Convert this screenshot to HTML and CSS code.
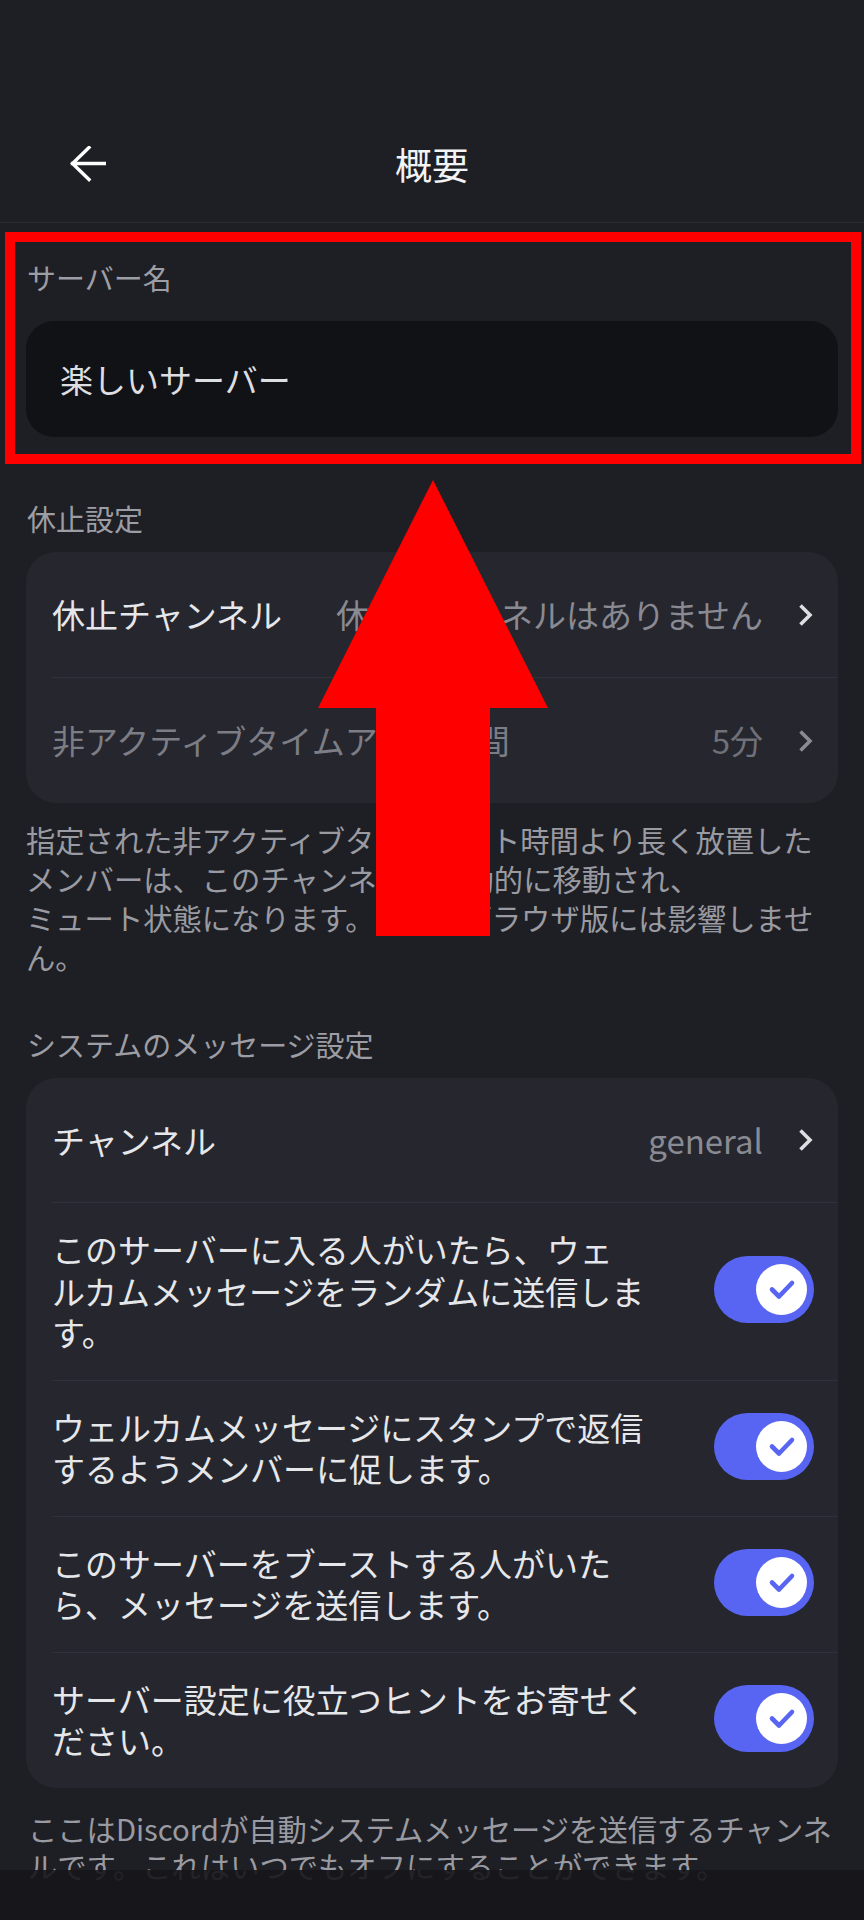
FILE: index.html
```html
<!DOCTYPE html>
<html lang="ja">
<head>
<meta charset="utf-8">
<title>概要</title>
<link rel="stylesheet" href="styles.css">
</head>
<body>
<div class="screen">
  <header class="topbar">
    <div class="topbar-row">
      <button class="back" aria-label="戻る">
        <svg width="36" height="36" viewBox="0 0 36 36"><path d="M19 1.5 L2.5 17.5 L19 33.5 M2.5 17.5 H35" fill="none" stroke="#ffffff" stroke-width="3.4" stroke-linecap="square" stroke-linejoin="miter"/></svg>
      </button>
      <h1 class="title">概要</h1>
      <span></span>
    </div>
  </header>

  <main class="content">
    <section class="group group-name">
      <h2 class="group-label">サーバー名</h2>
      <div class="input">楽しいサーバー</div>
    </section>

    <section class="group group-afk">
      <h2 class="group-label">休止設定</h2>
      <div class="card">
        <div class="row nav-row row-first">
          <span class="row-title">休止チャンネル</span>
          <span class="row-value">休止チャンネルはありません</span>
          <svg class="chev" width="15" height="24" viewBox="0 0 15 24"><path d="M2.5 2.5 L12 12 L2.5 21.5" fill="none" stroke="#dcdee1" stroke-width="3.6"/></svg>
        </div>
        <div class="row nav-row row-second disabled">
          <span class="row-title">非アクティブタイムアウト時間</span>
          <span class="row-value">5分</span>
          <svg class="chev" width="15" height="24" viewBox="0 0 15 24"><path d="M2.5 2.5 L12 12 L2.5 21.5" fill="none" stroke="#8a8b92" stroke-width="3.6"/></svg>
        </div>
      </div>
      <p class="hint hint-afk">指定された非アクティブタイムアウト時間より長く放置した<br>メンバーは、このチャンネルに自動的に移動され、<br>ミュート状態になります。これはブラウザ版には影響しませ<br>ん。</p>
    </section>

    <section class="group group-system">
      <h2 class="group-label">システムのメッセージ設定</h2>
      <div class="card">
        <div class="row nav-row row-channel">
          <span class="row-title">チャンネル</span>
          <span class="row-value">general</span>
          <svg class="chev" width="15" height="24" viewBox="0 0 15 24"><path d="M2.5 2.5 L12 12 L2.5 21.5" fill="none" stroke="#dcdee1" stroke-width="3.6"/></svg>
        </div>
        <div class="row toggle-row">
          <span class="toggle-text">このサーバーに入る人がいたら、ウェ<br>ルカムメッセージをランダムに送信しま<br>す。</span>
          <span class="toggle"><span class="knob"><svg width="50" height="50" viewBox="0 0 50 50"><path d="M15 24.5 L22 31.5 L35 18" fill="none" stroke="#5865f2" stroke-width="4.6" stroke-linecap="round" stroke-linejoin="round"/></svg></span></span>
        </div>
        <div class="row toggle-row">
          <span class="toggle-text">ウェルカムメッセージにスタンプで返信<br>するようメンバーに促します。</span>
          <span class="toggle"><span class="knob"><svg width="50" height="50" viewBox="0 0 50 50"><path d="M15 24.5 L22 31.5 L35 18" fill="none" stroke="#5865f2" stroke-width="4.6" stroke-linecap="round" stroke-linejoin="round"/></svg></span></span>
        </div>
        <div class="row toggle-row">
          <span class="toggle-text">このサーバーをブーストする人がいた<br>ら、メッセージを送信します。</span>
          <span class="toggle"><span class="knob"><svg width="50" height="50" viewBox="0 0 50 50"><path d="M15 24.5 L22 31.5 L35 18" fill="none" stroke="#5865f2" stroke-width="4.6" stroke-linecap="round" stroke-linejoin="round"/></svg></span></span>
        </div>
        <div class="row toggle-row">
          <span class="toggle-text">サーバー設定に役立つヒントをお寄せく<br>ださい。</span>
          <span class="toggle"><span class="knob"><svg width="50" height="50" viewBox="0 0 50 50"><path d="M15 24.5 L22 31.5 L35 18" fill="none" stroke="#5865f2" stroke-width="4.6" stroke-linecap="round" stroke-linejoin="round"/></svg></span></span>
        </div>
      </div>
      <p class="hint hint-system">ここはDiscordが自動システムメッセージを送信するチャンネ<br>ルです。これはいつでもオフにすることができます。</p>
    </section>
  </main>

  <div class="navbar"></div>

  <div class="annot-box"></div>
  <svg class="annot-arrow" width="864" height="960" viewBox="0 0 864 960">
    <polygon points="433,480 548,708 490,708 490,936 376,936 376,708 318,708" fill="#ff0000"/>
  </svg>
</div>
</body>
</html>
```

FILE: styles.css
```css
* {
  box-sizing: border-box;
}

html, body {
  margin: 0;
  padding: 0;
  background: #1e1f24;
}

body {
  font-family: "Noto Sans CJK JP", "Noto Sans", sans-serif;
  color: #e4e5e8;
}

.screen {
  position: relative;
  width: 864px;
  height: 1920px;
  overflow: hidden;
  background: #1e1f24;
}

/* header */
.topbar {
  height: 223px;
  padding-top: 106px;
  border-bottom: 1px solid #2b2c32;
}

.topbar-row {
  display: grid;
  grid-template-columns: 1fr auto 1fr;
  align-items: center;
  height: 116px;
}

.back {
  justify-self: start;
  margin-left: 70px;
  width: 36px;
  height: 36px;
  padding: 0;
  border: 0;
  background: none;
  display: flex;
}

.title {
  margin: 0;
  font-size: 37px;
  font-weight: 400;
  line-height: 44px;
  color: #f2f3f5;
}

/* content */
.content {
  padding: 34px 26px 0;
}

.group-label {
  margin: 0 0 14px;
  padding-left: 1px;
  font-size: 29px;
  font-weight: 400;
  line-height: 40px;
  color: #9d9ea5;
}

.group-name .group-label {
  margin-bottom: 24px;
}

.input {
  height: 116px;
  display: flex;
  align-items: center;
  padding-left: 34px;
  border-radius: 28px;
  background: #111215;
  font-size: 33px;
  color: #dddee1;
}

.group-afk {
  margin-top: 61px;
}

.group-system {
  margin-top: 48px;
}

.card {
  background: #25262e;
  border-radius: 30px;
  padding-left: 26px;
}

.row {
  display: flex;
  align-items: center;
  padding-right: 24px;
}

.row + .row {
  border-top: 1.5px solid #30313a;
}

.nav-row {
  height: 125px;
  font-size: 33px;
  line-height: 41px;
}

.row-second {
  height: 126px;
}

.row-channel {
  height: 124px;
}

.row-title {
  white-space: nowrap;
  color: #e6e7ea;
}

.row-value {
  margin-left: auto;
  white-space: nowrap;
  color: #898a92;
}

.disabled .row-title {
  color: #7c7d85;
}

.disabled .row-value {
  color: #6f7078;
}

.chev {
  flex: none;
  margin-left: 35px;
  margin-right: 1px;
}

.toggle-row {
  padding-top: 26px;
  padding-bottom: 26px;
  justify-content: space-between;
}

.toggle-text {
  font-size: 33px;
  line-height: 41.5px;
  white-space: nowrap;
  color: #e6e7ea;
}

.toggle {
  flex: none;
  width: 100px;
  height: 67px;
  border-radius: 34px;
  background: #5865f2;
  display: flex;
  align-items: center;
  justify-content: flex-end;
  padding-right: 7px;
  margin-top: -3px;
}

.knob {
  width: 51px;
  height: 51px;
  border-radius: 50%;
  background: #ffffff;
  display: flex;
  align-items: center;
  justify-content: center;
}

.hint {
  margin: 0;
  font-size: 29.3px;
  white-space: nowrap;
  color: #9a9ba2;
}

.hint-afk {
  margin-top: 17px;
  line-height: 39px;
}

.hint-system {
  margin-top: 22px;
  padding-left: 2px;
  line-height: 37px;
}

/* system navigation bar */
.navbar {
  position: absolute;
  left: 0;
  right: 0;
  bottom: 0;
  height: 50px;
  background: rgba(22, 22, 27, 0.9);
}

/* red annotation overlays */
.annot-box {
  position: absolute;
  left: 5px;
  top: 232px;
  width: 856px;
  height: 232px;
  border: 10px solid #ff0000;
}

.annot-arrow {
  position: absolute;
  left: 0;
  top: 0;
}
```
